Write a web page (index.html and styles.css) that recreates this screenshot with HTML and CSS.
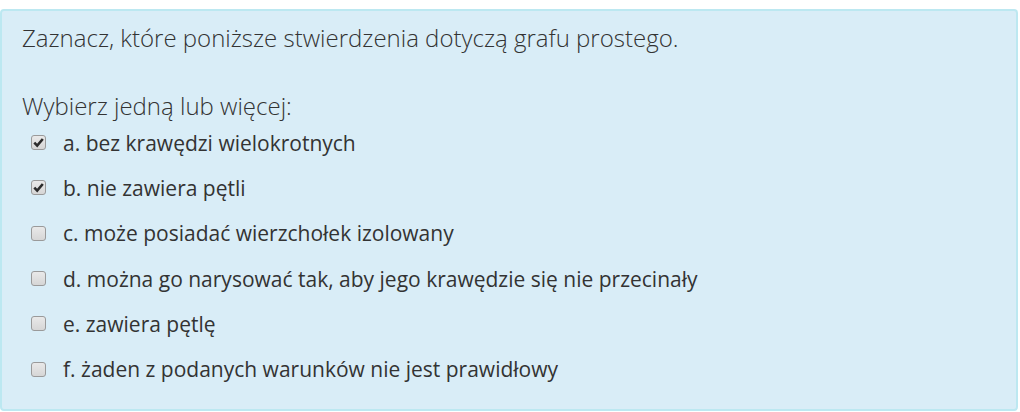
FILE: index.html
```html
<!DOCTYPE html>
<html lang="pl">
<head>
<meta charset="utf-8">
<link rel="stylesheet" href="styles.css">
</head>
<body>
<div class="formulation">
  <div class="qtext">Zaznacz, które poniższe stwierdzenia dotyczą grafu prostego.</div>
  <div class="ablock">
    <div class="prompt">Wybierz jedną lub więcej:</div>
    <div class="answer">
      <div class="opt"><span class="cb checked"><svg viewBox="0 0 11 11" width="11" height="11"><path d="M1.3 5.6 L4.2 8.6 L9.8 2" fill="none" stroke="#2b2b2b" stroke-width="2.6"/></svg></span><span class="lbl">a. bez krawędzi wielokrotnych</span></div>
      <div class="opt"><span class="cb checked"><svg viewBox="0 0 11 11" width="11" height="11"><path d="M1.3 5.6 L4.2 8.6 L9.8 2" fill="none" stroke="#2b2b2b" stroke-width="2.6"/></svg></span><span class="lbl">b. nie zawiera pętli</span></div>
      <div class="opt"><span class="cb"></span><span class="lbl">c. może posiadać wierzchołek izolowany</span></div>
      <div class="opt"><span class="cb"></span><span class="lbl">d. można go narysować tak, aby jego krawędzie się nie przecinały</span></div>
      <div class="opt"><span class="cb"></span><span class="lbl">e. zawiera pętlę</span></div>
      <div class="opt"><span class="cb"></span><span class="lbl">f. żaden z podanych warunków nie jest prawidłowy</span></div>
    </div>
  </div>
</div>
</body>
</html>
```
FILE: styles.css
```css
html, body {
  margin: 0;
  padding: 0;
  background: #fff;
}
body {
  padding: 9px 2px 1px 0;
  font-family: "Open Sans", "Liberation Sans", sans-serif;
  color: #333;
}
.formulation {
  box-sizing: border-box;
  height: 402px;
  background: #d9edf7;
  border: 2px solid #bce8f1;
  border-radius: 4px;
  padding: 9px 20px 0 20px;
}
.qtext {
  font-size: 24px;
  font-weight: 300;
  line-height: 36px;
  color: #333;
}
.ablock {
  margin-top: 36px;
}
.prompt {
  font-size: 24px;
  font-weight: 300;
  line-height: 28px;
}
.answer {
  display: flex;
  flex-direction: column;
}
.opt {
  display: flex;
  align-items: center;
  height: 45.33px;
  padding-left: 9px;
}
.cb {
  box-sizing: border-box;
  width: 15px;
  height: 15px;
  border: 1px solid #9a9a9a;
  border-radius: 3px;
  background: linear-gradient(#e9e9e9, #d6d6d6);
  display: flex;
  align-items: center;
  justify-content: center;
  margin-right: 17px;
  flex: none;
}
.lbl {
  font-size: 21px;
  line-height: 28px;
  color: #333;
}
```
